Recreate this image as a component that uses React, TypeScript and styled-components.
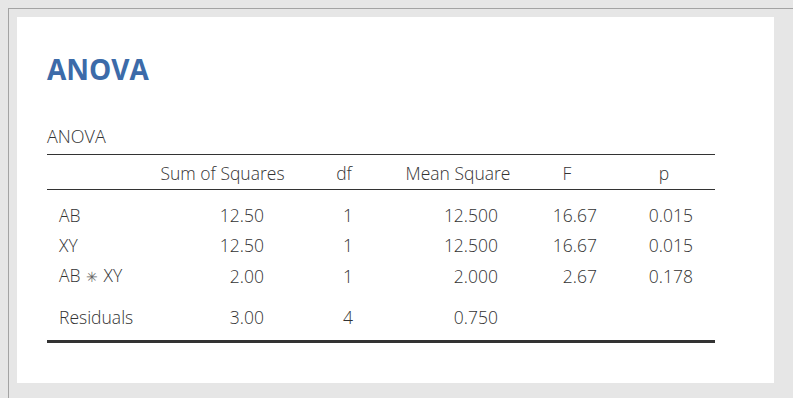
import { createGlobalStyle } from "styled-components";
import styled from "styled-components";

const GlobalStyle = createGlobalStyle`
  html, body {
    margin: 0;
    padding: 0;
    background: #e6e6e6;
  }
  body {
    padding: 8px 0 0 8px;
    font-family: "Open Sans", "DejaVu Sans", sans-serif;
  }
`;

const Frame = styled.div`
  border-top: 1px solid #a3a3a3;
  border-left: 1px solid #a3a3a3;
  padding: 8px 0 0 8px;
  height: 390px;
  box-sizing: border-box;
`;

const Panel = styled.div`
  background: #fff;
  width: 757px;
  height: 366px;
  box-sizing: border-box;
  padding: 33px 0 0 30px;
`;

const Title = styled.h1`
  margin: 0;
  font-size: 28px;
  line-height: 38px;
  font-weight: 700;
  color: #3c6ba9;
`;

const Caption = styled.div`
  margin-top: 36px;
  font-size: 18px;
  line-height: 24px;
  font-weight: 300;
  color: #333;
`;

const Table = styled.table`
  margin-top: 6px;
  width: 668px;
  table-layout: fixed;
  border-collapse: collapse;
  color: #333;
  font-size: 17.5px;
  font-weight: 300;
  border-top: 1px solid #333;
  border-bottom: 3px solid #333;
`;

const HeadRow = styled.tr`
  border-bottom: 1px solid #333;
`;

const HeadCell = styled.th`
  font-weight: 300;
  text-align: center;
  line-height: 30px;
  padding: 3px 0 1px;
  white-space: nowrap;
`;

const Row = styled.tr<{ $gap?: number; $bottom?: number }>`
  & > td {
    padding-top: ${(p) => p.$gap ?? 0}px;
    padding-bottom: ${(p) => p.$bottom ?? 0}px;
  }
`;

const Label = styled.td`
  line-height: 30px;
  padding-left: 12px;
  white-space: nowrap;
`;

const Num = styled.td<{ $pad: number }>`
  line-height: 30px;
  text-align: right;
  padding-right: ${(p) => p.$pad}px;
  white-space: nowrap;
`;

const Star = styled.span`
  font-family: "DejaVu Sans", sans-serif;
  font-size: 14px;
  color: #666;
  padding: 0 1px;
`;

const widths = [105, 141, 102, 126, 92, 102];
const pads = [29, 42, 23, 16, 22];

const rows = [
  { label: "AB", v: ["12.50", "1", "12.500", "16.67", "0.015"] },
  { label: "XY", v: ["12.50", "1", "12.500", "16.67", "0.015"] },
  { label: "AB ✳ XY", v: ["2.00", "1", "2.000", "2.67", "0.178"] },
  { label: "Residuals", v: ["3.00", "4", "0.750", "", ""] },
];

function RowLabel({ text }: { text: string }) {
  if (!text.includes("✳")) return <>{text}</>;
  const [a, b] = text.split(" ✳ ");
  return (
    <>
      {a} <Star>✳</Star> {b}
    </>
  );
}

export default function App() {
  return (
    <>
      <GlobalStyle />
      <Frame>
        <Panel>
          <Title>ANOVA</Title>
          <Caption>ANOVA</Caption>
          <Table>
            <colgroup>
              {widths.map((w, i) => (
                <col key={i} style={{ width: w }} />
              ))}
            </colgroup>
            <thead>
              <HeadRow>
                <HeadCell />
                <HeadCell>Sum of Squares</HeadCell>
                <HeadCell>df</HeadCell>
                <HeadCell>Mean Square</HeadCell>
                <HeadCell>F</HeadCell>
                <HeadCell>p</HeadCell>
              </HeadRow>
            </thead>
            <tbody>
              {rows.map((r, i) => (
                <Row
                  key={r.label}
                  $gap={i === 0 ? 10 : i === 3 ? 10 : 0}
                  $bottom={i === 3 ? 8 : 0}
                >
                  <Label>
                    <RowLabel text={r.label} />
                  </Label>
                  {r.v.map((v, j) => (
                    <Num key={j} $pad={pads[j]}>
                      {v}
                    </Num>
                  ))}
                </Row>
              ))}
            </tbody>
          </Table>
        </Panel>
      </Frame>
    </>
  );
}
